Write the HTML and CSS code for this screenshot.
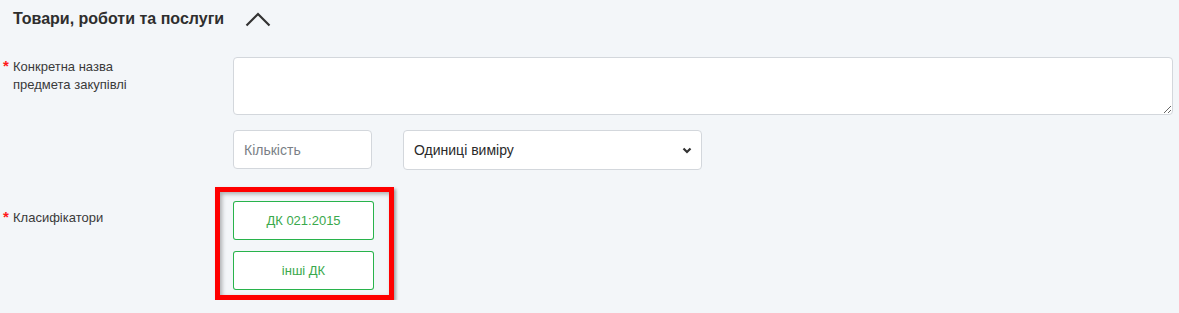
FILE: index.html
```html
<!DOCTYPE html>
<html lang="uk">
<head>
    <meta charset="UTF-8">
    <meta name="viewport" content="width=device-width, initial-scale=1.0">
    <title>Товари, роботи та послуги</title>
    <link rel="stylesheet" href="styles.css">
</head>
<body>
    <div class="section">
        <div class="section-head">
            <h2>Товари, роботи та послуги</h2>
            <svg class="toggle" width="26" height="15" viewBox="0 0 26 15">
                <polyline points="1.5,13.5 13,2 24.5,13.5" fill="none" stroke="#333" stroke-width="2.2"/>
            </svg>
        </div>

        <div class="form-row row-name">
            <label class="field-label"><span class="req">*</span><span class="label-text">Конкретна назва предмета закупівлі</span></label>
            <div class="field">
                <textarea class="text-area"></textarea>
            </div>
        </div>

        <div class="form-row row-qty">
            <div></div>
            <div class="field inline">
                <input type="text" class="qty" placeholder="Кількість">
                <select class="units">
                    <option>Одиниці виміру</option>
                </select>
            </div>
        </div>

        <div class="form-row row-class">
            <label class="field-label"><span class="req">*</span><span class="label-text">Класифікатори</span></label>
            <div class="field">
                <div class="marked">
                    <div class="btn-outline">ДК 021:2015</div>
                    <div class="btn-outline">інші ДК</div>
                </div>
            </div>
        </div>
    </div>
</body>
</html>
```

FILE: styles.css
```css
* { margin: 0; padding: 0; box-sizing: border-box; }
body {
    font-family: 'Liberation Sans', Arial, sans-serif;
    background: #f3f6f9;
    color: #333;
}
.section { padding: 9px 6px 0 0; }
.section-head { display: flex; align-items: center; padding-left: 13px; height: 20px; }
.section-head h2 { font-size: 16px; font-weight: bold; line-height: 20px; color: #2e2e2e; }
.toggle { margin-left: 21px; display: block; }

.form-row { display: grid; grid-template-columns: 233px 1fr; }
.row-name { margin-top: 28px; }
.row-qty { margin-top: 15px; }
.row-class { margin-top: 17px; }

.field-label { display: flex; padding-left: 2px; font-size: 13px; line-height: 18px; color: #3a3a3a; }
.row-name .field-label { padding-top: 1px; }
.row-class .field-label { padding-top: 22px; }
.req { color: #ff1a1a; width: 11px; flex: none; font-size: 15px; font-weight: bold; line-height: 16px; padding-left: 1px; }
.label-text { width: 130px; }

.text-area {
    display: block; width: 100%; height: 58px;
    border: 1px solid #d3d7dc; border-radius: 4px; background: #fff;
    font-family: inherit; font-size: 14px; padding: 6px 10px;
}
.inline { display: flex; gap: 31px; align-items: flex-start; }
.qty {
    width: 139px; height: 39px; padding: 0 10px;
    border: 1px solid #d3d7dc; border-radius: 4px; background: #fff;
    font-family: inherit; font-size: 14px; color: #333;
}
.qty::placeholder { color: #7a7f86; }
.units {
    width: 299px; height: 40px; padding: 0 10px;
    border: 1px solid #d3d7dc; border-radius: 4px;
    font-family: inherit; font-size: 14px; color: #2a2a2a;
    appearance: none; -webkit-appearance: none;
    background: #fff url("data:image/svg+xml,%3Csvg xmlns='http://www.w3.org/2000/svg' width='10' height='7' viewBox='0 0 10 7'%3E%3Cpolyline points='1.5,1.5 5,5 8.5,1.5' fill='none' stroke='%23333' stroke-width='2.2'/%3E%3C/svg%3E") no-repeat right 9px center;
}

.marked {
    width: fit-content; margin-left: -18px;
    border: 5px solid #ff0000;
    padding: 9px 15px 5px 13px;
    box-shadow: 2px 2px 3px rgba(0,0,0,0.35), inset 2px 2px 4px rgba(0,0,0,0.3);
}
.btn-outline {
    display: flex; align-items: center; justify-content: center;
    width: 141px; height: 39px;
    background: #fff;
    box-shadow: inset 0 0 0 1px #28b34b;
    border-radius: 3px;
    color: #3aa94c; font-size: 13px; cursor: pointer;
}
.btn-outline + .btn-outline { margin-top: 11px; }
```
